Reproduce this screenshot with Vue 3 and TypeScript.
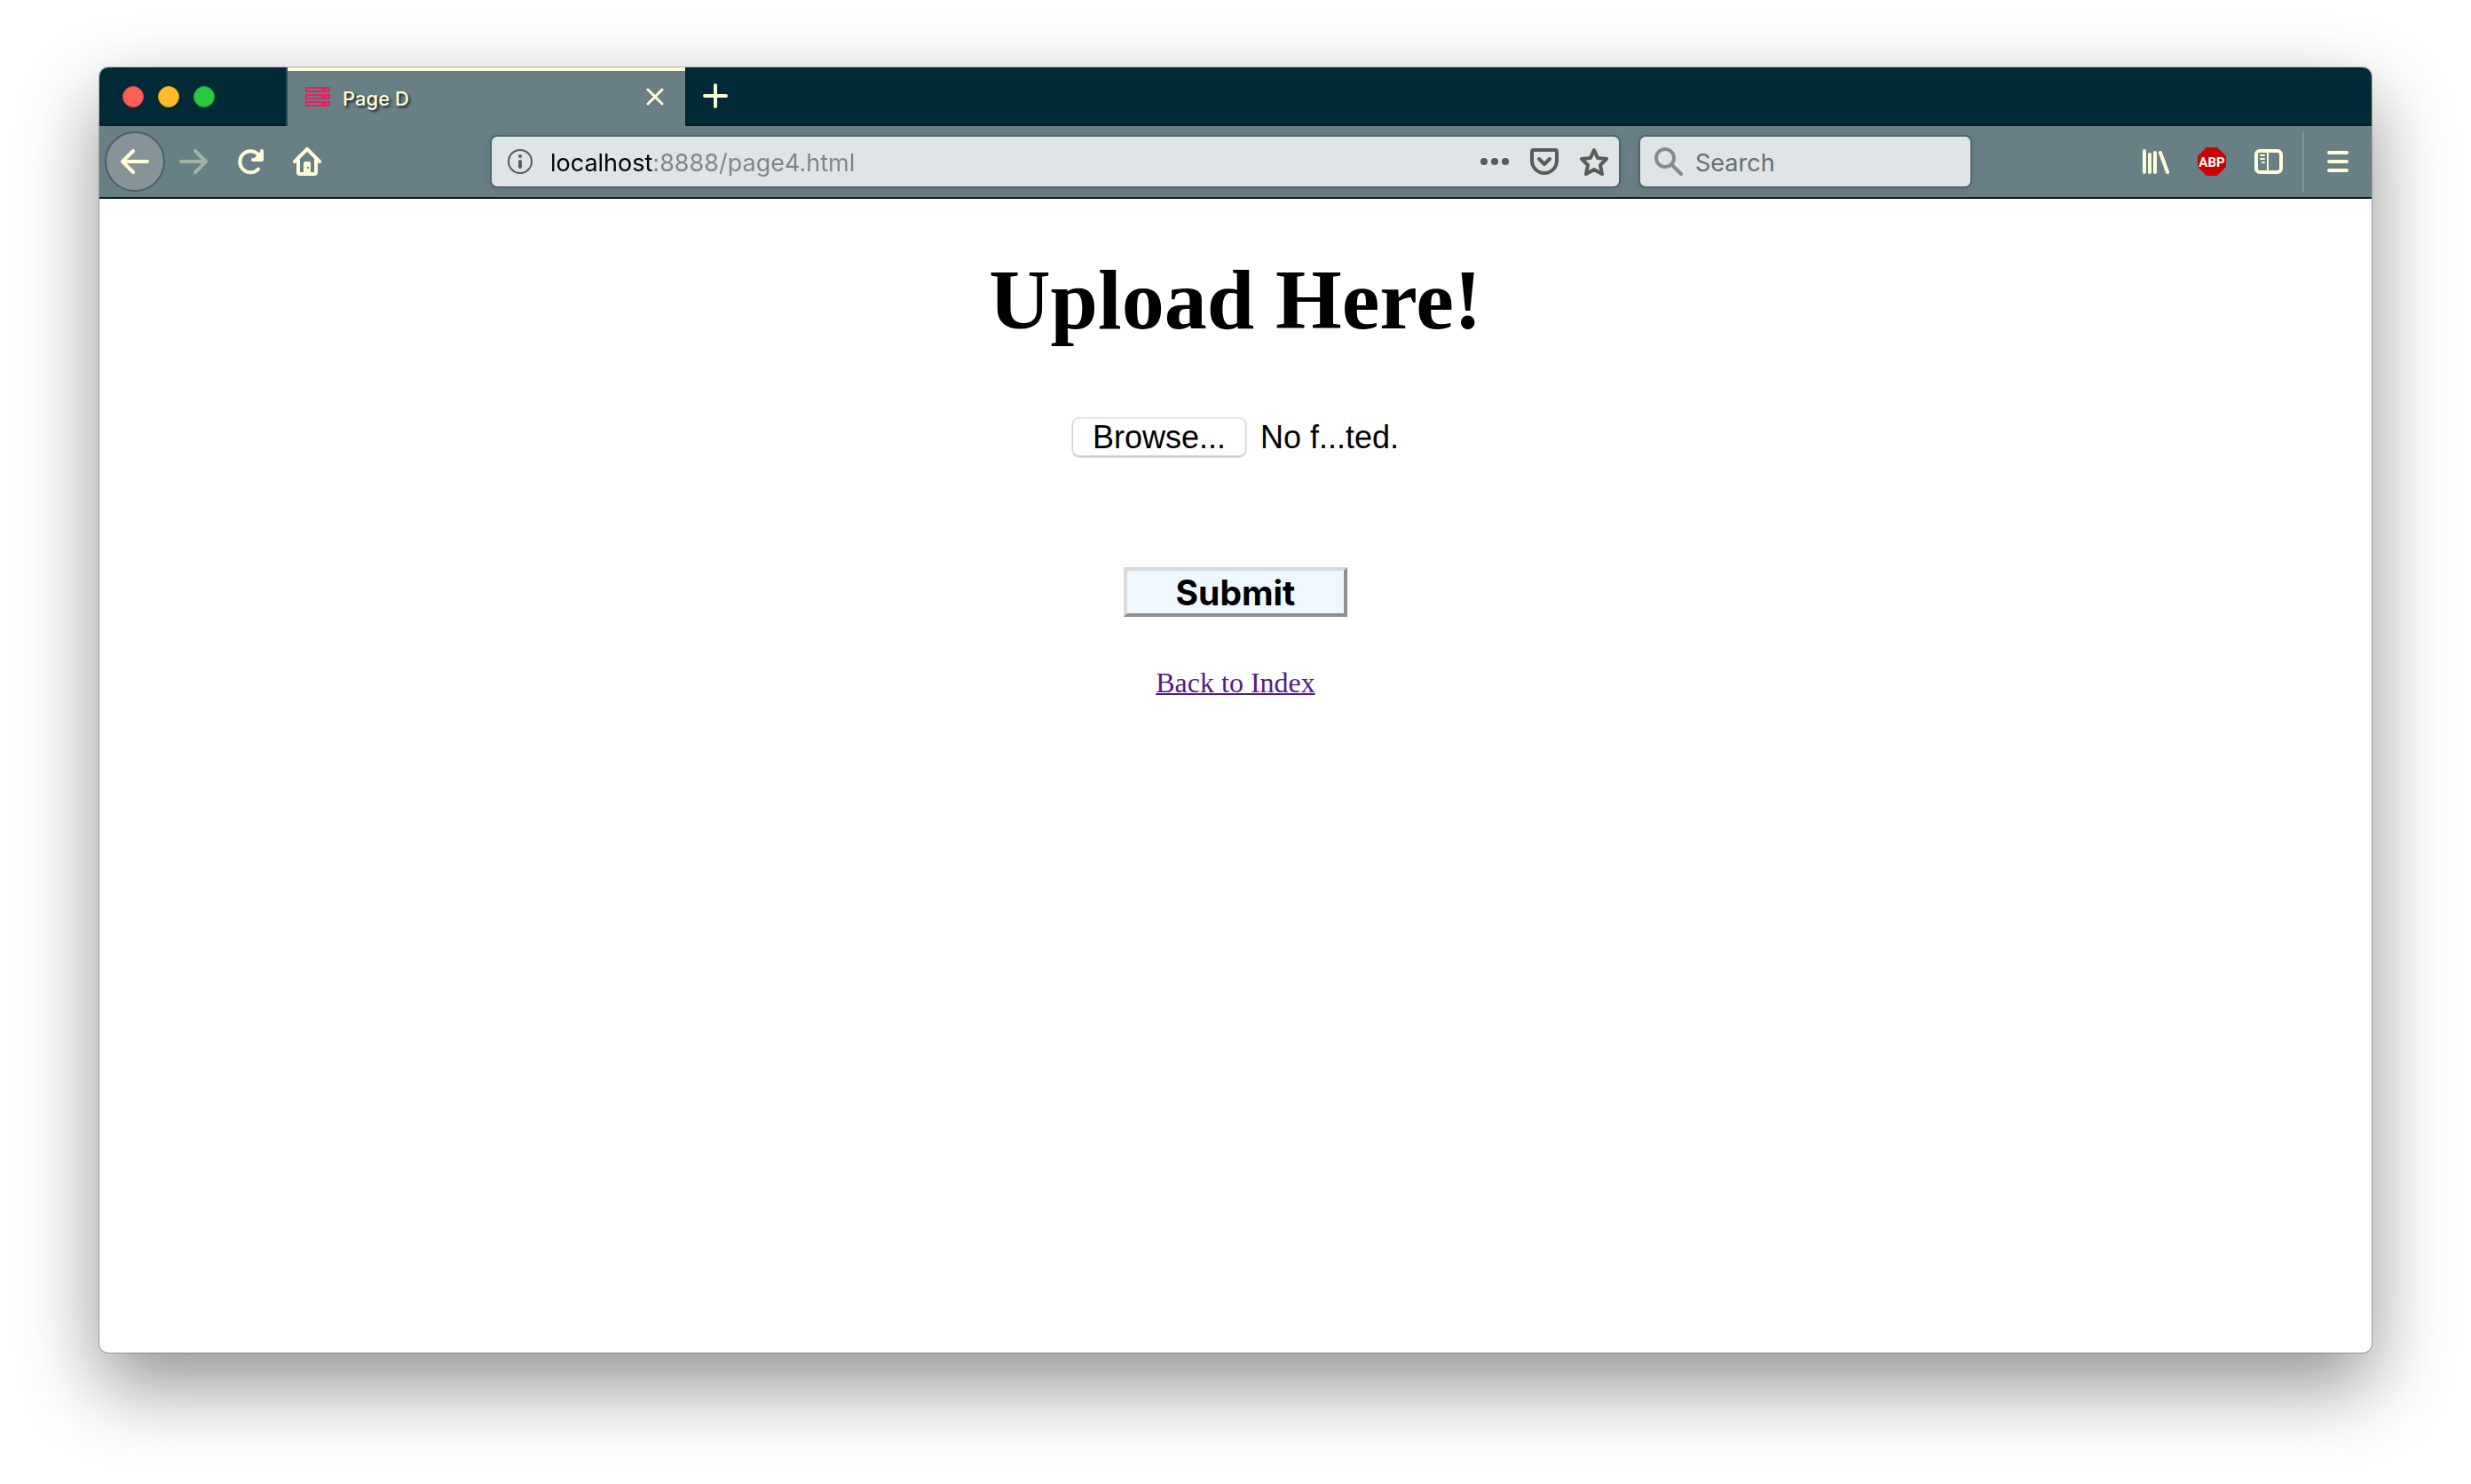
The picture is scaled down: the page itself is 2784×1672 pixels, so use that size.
<script setup lang="ts">
import { ref } from 'vue'

const address = ref('localhost:8888/page4.html')
const query = ref('')
const fileLabel = ref('No f...ted.')
const picker = ref<HTMLInputElement | null>(null)

function openPicker(): void {
  picker.value?.click()
}

function onPick(event: Event): void {
  const file = (event.target as HTMLInputElement).files?.[0]
  if (file) fileLabel.value = file.name
}
</script>

<template>
  <div class="desktop">
    <div class="window">
      <header class="tabbar">
        <div class="lights">
          <button class="light red" aria-label="Close window"></button>
          <button class="light amber" aria-label="Minimise window"></button>
          <button class="light green" aria-label="Zoom window"></button>
        </div>
        <div class="tab">
          <svg class="favicon" width="28" height="22" viewBox="0 0 28 22" aria-hidden="true">
            <g v-for="y in [0, 8, 16]" :key="y">
              <rect x="0" :y="y" width="28" height="6" fill="#e91e63" />
              <rect x="2" :y="y + 2" width="16" height="2" fill="#677f85" />
              <rect x="24" :y="y + 2" width="2" height="2" fill="#677f85" />
            </g>
          </svg>
          <span class="tab-title">Page D</span>
          <button class="icon-btn close" aria-label="Close tab">
            <svg width="20" height="20" viewBox="0 0 20 20"><path d="M2 2l16 16M18 2L2 18" stroke-width="3" /></svg>
          </button>
        </div>
        <button class="icon-btn plus" aria-label="New tab">
          <svg width="28" height="28" viewBox="0 0 28 28"><path d="M14 2v24M2 14h24" stroke-width="4" /></svg>
        </button>
      </header>

      <nav class="toolbar">
        <button class="icon-btn back" aria-label="Back">
          <svg width="32" height="32" viewBox="0 0 32 32"><path d="M30 16H3M14 4L2 16l12 12" stroke-width="4" /></svg>
        </button>
        <button class="icon-btn forward" aria-label="Forward" disabled>
          <svg width="32" height="32" viewBox="0 0 32 32"><path d="M2 16h27M18 4l12 12-12 12" stroke-width="4" /></svg>
        </button>
        <button class="icon-btn" aria-label="Reload">
          <svg width="32" height="32" viewBox="0 0 32 32">
            <path d="M25 24.5A12 12 0 1 1 25 8" stroke-width="4" />
            <path d="M29 4v10H19" stroke-width="4" />
            <path d="M28 6v7h-7z" stroke-width="2" fill="#ffffd8" />
          </svg>
        </button>
        <button class="icon-btn" aria-label="Home">
          <svg width="32" height="32" viewBox="0 0 32 32">
            <path d="M2 16L16 2l14 14M6 14v14q0 2 2 2h16q2 0 2-2V14" stroke-width="4" />
            <path d="M12 30V18q0-2 2-2h4q2 0 2 2v12zM16 22v2h2v-2z" stroke="none" fill="#ffffd8" fill-rule="evenodd" />
          </svg>
        </button>
        <div class="spring"></div>

        <div class="field address">
          <svg width="28" height="28" viewBox="0 0 28 28" aria-hidden="true">
            <circle cx="14" cy="14" r="13" fill="none" stroke="#5a5b5b" stroke-width="2" />
            <circle cx="14" cy="8" r="2" fill="#5a5b5b" />
            <path d="M14 14v6" stroke="#5a5b5b" stroke-width="4" stroke-linecap="round" />
          </svg>
          <input v-model="address" class="url" type="text" aria-label="Address" />
          <button class="icon-btn dark" aria-label="Page actions">
            <svg class="dots" width="32" height="8" viewBox="0 0 32 8">
              <circle cx="4" cy="4" r="4" />
              <circle cx="16" cy="4" r="4" />
              <circle cx="28" cy="4" r="4" />
            </svg>
          </button>
          <button class="icon-btn dark" aria-label="Save to Pocket">
            <svg width="32" height="32" viewBox="0 0 32 32">
              <path d="M4 3h24q2 0 2 2v10a14 14 0 0 1-28 0V5q0-2 2-2z" stroke-width="4" />
              <path d="M10 13l6 6 6-6" stroke-width="4" />
            </svg>
          </button>
          <button class="icon-btn dark" aria-label="Bookmark">
            <svg width="32" height="32" viewBox="0 0 32 32">
              <path d="M16 3l4 9 10 1-7 7 2 10-9-5-9 5 2-10-7-7 10-1z" stroke-width="4" />
            </svg>
          </button>
        </div>

        <div class="field search">
          <svg width="32" height="32" viewBox="0 0 32 32" fill="none" stroke="#868a8b" aria-hidden="true">
            <circle cx="12" cy="12" r="10" stroke-width="4" />
            <path d="M20 20l10 10" stroke-width="4" stroke-linecap="round" />
          </svg>
          <input v-model="query" type="text" placeholder="Search" aria-label="Search" />
        </div>
        <div class="spring"></div>

        <button class="icon-btn" aria-label="Library">
          <svg width="32" height="28" viewBox="0 0 32 28">
            <path d="M4 2v24M10 6v20M16 4v22M22 4l8 22" stroke-width="4" />
          </svg>
        </button>
        <button class="icon-btn" aria-label="Adblock Plus">
          <svg width="32" height="32" viewBox="0 0 32 32">
            <path d="M10 0h12l10 10v12L22 32H10L0 22V10z" fill="#cb0000" stroke="none" />
            <text class="abp" x="16" y="22" text-anchor="middle">ABP</text>
          </svg>
        </button>
        <button class="icon-btn" aria-label="Sidebars">
          <svg width="32" height="28" viewBox="0 0 32 28">
            <rect x="2" y="2" width="28" height="24" rx="4" stroke-width="4" />
            <path d="M15 3v22" stroke-width="2" />
            <path d="M7 7h4M7 11h4M9 15h2" stroke-width="2" />
          </svg>
        </button>
        <span class="divider"></span>
        <button class="icon-btn menu" aria-label="Menu">
          <svg width="24" height="24" viewBox="0 0 24 24"><path d="M2 2h20M2 12h20M2 22h20" stroke-width="4" /></svg>
        </button>
      </nav>

      <main class="page">
        <h1>Upload Here!</h1>
        <form @submit.prevent>
          <div class="file-row">
            <input id="upload" ref="picker" type="file" hidden @change="onPick" />
            <button class="browse" type="button" @click="openPicker">Browse...</button>
            <label for="upload">{{ fileLabel }}</label>
          </div>
          <button class="submit" type="submit">Submit</button>
        </form>
        <a href="index.html">Back to Index</a>
      </main>
    </div>
  </div>
</template>

<style>
body {
  margin: 0;
  background: #fff;
}
</style>

<style scoped>
* {
  box-sizing: border-box;
}

.desktop {
  display: flex;
  min-height: 100vh;
  padding: 76px 112px 148px;
  overflow: hidden;
}

.window {
  display: flex;
  flex: 1;
  flex-direction: column;
  min-width: 0;
  border-radius: 10px;
  background: #fff;
  box-shadow: 0 0 0 1px rgba(0, 0, 0, 0.24), 0 36px 88px rgba(0, 0, 0, 0.44);
}

button {
  margin: 0;
  padding: 0;
  border: 0;
  background: none;
  color: inherit;
}

svg {
  display: block;
  flex: none;
}

.icon-btn {
  display: flex;
  flex: none;
  align-items: center;
  justify-content: center;
  width: 64px;
  height: 68px;
}

.icon-btn svg {
  fill: none;
  stroke: #ffffd8;
  stroke-linecap: round;
  stroke-linejoin: round;
}

/* Tab strip */
.tabbar {
  display: flex;
  height: 66px;
  border-radius: 10px 10px 0 0;
  background: linear-gradient(#002b36 64px, #001f27 64px);
  font-family: Inter, "Liberation Sans", sans-serif;
}

.lights {
  display: flex;
  align-items: center;
  gap: 16px;
  width: 210px;
  padding-left: 26px;
}

.light {
  width: 24px;
  height: 24px;
  border: 1px solid transparent;
  border-radius: 50%;
}

.red {
  border-color: #e2463f;
  background: #ff5f57;
}

.amber {
  border-color: #e1a116;
  background: #ffbd2e;
}

.green {
  border-color: #12ac28;
  background: #28c940;
}

.tab {
  display: flex;
  align-items: center;
  width: 452px;
  padding: 0 2px 0 20px;
  border-left: 2px solid #284950;
  border-right: 2px solid #001f27;
  background: linear-gradient(#ffffd8 4px, #677f85 4px);
}

.tab-title {
  flex: 1;
  margin-left: 14px;
  padding-top: 4px;
  color: #ffffd8;
  font-size: 22px;
  font-weight: 500;
  line-height: 28px;
  text-shadow: 2px 2px 3px rgba(0, 0, 0, 0.75);
}

.close,
.plus {
  height: 64px;
}

/* Navigation toolbar */
.toolbar {
  display: flex;
  align-items: center;
  height: 82px;
  padding-left: 6px;
  border-bottom: 2px solid #001f27;
  background: #677f85;
}

.back {
  width: 68px;
  border: 2px solid #4c5f65;
  border-radius: 50%;
  background: #869499;
}

.forward {
  opacity: 0.4;
}

.spring {
  flex: none;
  width: 174px;
}

.field {
  display: flex;
  align-items: center;
  height: 60px;
  border: 2px solid #506469;
  border-radius: 8px;
  background: #dfe4e7;
  box-shadow: 0 2px 8px rgba(0, 0, 0, 0.08);
}

.field input {
  flex: 1;
  min-width: 0;
  height: 56px;
  padding: 2px 0 0;
  border: 0;
  outline: 0;
  background: none;
  color: #000;
  font-family: Inter, "Liberation Sans", sans-serif;
  font-size: 27px;
}

.address {
  flex: 1;
  margin-right: 20px;
  padding-left: 18px;
}

/* The host is black, the rest of the address is grey */
.field .url {
  margin-left: 20px;
  background: linear-gradient(90deg, #000 115px, #828384 115px);
  background-clip: text;
  color: transparent;
}

.address .icon-btn {
  width: 56px;
  height: 56px;
}

.dark svg {
  stroke: #5a5a58;
}

.dark .dots {
  fill: #5a5a58;
  stroke: none;
}

.search {
  width: 376px;
  padding-left: 16px;
}

.search input {
  margin-left: 14px;
}

.search input::placeholder {
  color: #6b6e6f;
  opacity: 1;
}

.abp {
  fill: #fff;
  stroke: none;
  font-family: Roboto, "Noto Sans", sans-serif;
  font-size: 15px;
  font-weight: 700;
}

.divider {
  width: 2px;
  height: 68px;
  margin-left: 6px;
  background: #83969a;
}

.icon-btn.menu {
  width: 76px;
}

/* Page content */
.page {
  display: flex;
  flex-direction: column;
  align-items: center;
  padding-top: 59px;
  font-family: "Liberation Serif", "Times New Roman", serif;
}

h1 {
  margin: 0 0 77px;
  font-size: 96px;
  line-height: 110px;
}

form {
  display: flex;
  flex-direction: column;
  align-items: center;
}

.file-row {
  display: flex;
  align-items: center;
  gap: 16px;
  height: 44px;
  font-family: "Liberation Sans", Arial, sans-serif;
  font-size: 36px;
  line-height: 40px;
}

.file-row label {
  padding-top: 2px;
}

.browse {
  width: 196px;
  height: 44px;
  padding-top: 1px;
  border: 1px solid #d2d2d2;
  border-top: 2px solid #e6e6e6;
  border-radius: 8px;
  box-shadow: 0 1px 2px rgba(0, 0, 0, 0.3);
  font: inherit;
}

.submit {
  width: 252px;
  height: 56px;
  margin-top: 125px;
  padding-top: 2px;
  border: 4px solid;
  border-color: #d9d9d9 #8e8e8e #8e8e8e #d9d9d9;
  background: #f0f8ff;
  font: bold 39px/46px Inter, "Liberation Sans", sans-serif;
}

a {
  margin-top: 55px;
  color: #551a8b;
  font-size: 32px;
  line-height: 38px;
  text-decoration-thickness: 2px;
}
</style>
